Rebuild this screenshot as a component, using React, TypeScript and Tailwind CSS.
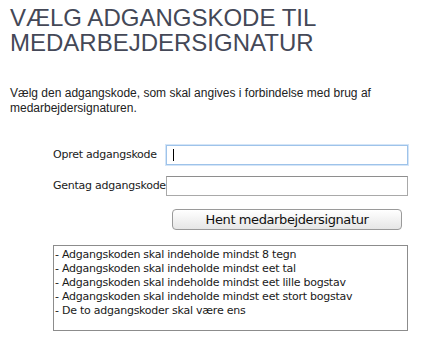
const RULES = [
  "- Adgangskoden skal indeholde mindst 8 tegn",
  "- Adgangskoden skal indeholde mindst eet tal",
  "- Adgangskoden skal indeholde mindst eet lille bogstav",
  "- Adgangskoden skal indeholde mindst eet stort bogstav",
  "- De to adgangskoder skal være ens",
];

const lucida = "font-['DejaVu_Sans',sans-serif]";

export default function App() {
  return (
    <div className="h-[347px] w-[421px] overflow-hidden bg-white">
      <h1 className="pl-[10px] pt-[5px] font-['Liberation_Sans',Arial,sans-serif] text-[24px] leading-[25px] font-normal text-[#444857]">
        <span className="block">VÆLG ADGANGSKODE TIL</span>
        <span className="block">MEDARBEJDERSIGNATUR</span>
      </h1>

      <p className="mt-[31px] w-[416px] pl-[10px] font-['Liberation_Sans',Arial,sans-serif] text-[12px] leading-[15px] text-[#222]">
        Vælg den adgangskode, som skal angives i forbindelse med brug af medarbejdersignaturen.
      </p>

      <div className={`ml-[53px] mt-[29px] w-[355px] ${lucida} text-[11px] tracking-[-0.25px] text-[#1a1a1a]`}>
        <div className="grid grid-cols-[113px_242px] items-center gap-y-[11px]">
          <span>Opret adgangskode</span>
          <div className="relative h-[20px] border border-[#9ec3ea] shadow-[0_0_0_1px_#d4e5f7]">
            <span className="absolute left-[6px] top-[3px] h-[12px] w-px bg-black" />
          </div>
          <span>Gentag adgangskode</span>
          <div className="h-[20px] border border-[#a9a9a9] border-t-[#8e8e8e]" />
        </div>

        <button
          type="button"
          className="ml-[119px] mt-[13px] h-[21px] w-[230px] rounded-[4px] border border-[#9a9a9a] bg-gradient-to-b from-white to-[#e6e6e6] text-[13px] leading-[19px] tracking-[-0.4px] text-[#111]"
        >
          Hent medarbejdersignatur
        </button>

        <div className="mt-[15px] h-[86px] w-[355px] border border-[#8c8c8c] px-px pt-[2px] leading-[14px]">
          {RULES.map((rule) => (
            <div key={rule}>{rule}</div>
          ))}
        </div>
      </div>
    </div>
  );
}
